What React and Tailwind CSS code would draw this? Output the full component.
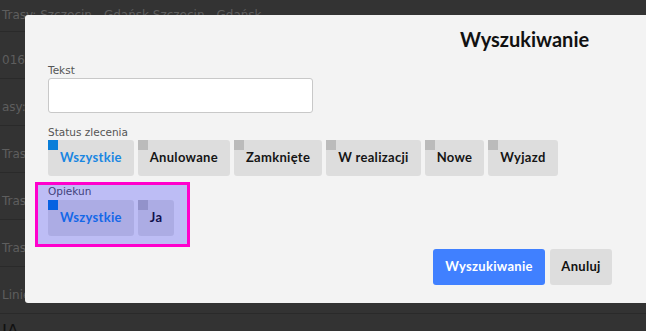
import React from "react";

const rows = [
  "Trasy: Szczecin - Gdańsk Szczecin - Gdańsk",
  "016",
  "asy: Hel",
  "Trasy: Gdańsk",
  "Trasy: Gdańsk",
  "Trasy: Gdańsk",
  "Linie",
];

function Chip({ label, selected }) {
  return (
    <button
      className={`relative h-[36px] rounded-[3px] bg-[#dddddd] px-[12px] text-[13px] font-bold tracking-[0.3px] ${
        selected ? "text-[#1a86e2]" : "text-[#151515]"
      }`}
    >
      <span
        className={`absolute left-0 top-0 h-[10px] w-[10px] ${
          selected ? "bg-[#0a7ed9]" : "bg-[#bbbbbb]"
        }`}
      />
      {label}
    </button>
  );
}

export default function App() {
  return (
    <div className="relative h-[331px] w-[646px] overflow-hidden bg-[#333333] font-['Lato',sans-serif]">
      <div className="flex flex-col font-['DejaVu_Sans',sans-serif] text-[12px] text-[#5e5e5e]">
        {rows.map((r, i) => (
          <div
            key={i}
            className={`flex items-end border-b border-[#2a2a2a] px-[2px] ${
              i === 0 ? "h-[32px] pb-[7px]" : "h-[47px] pb-[9px]"
            }`}
          >
            {r}
          </div>
        ))}
        <div className="px-[2px] pt-[8px] text-[17px] leading-[18px] text-[#111]">IA</div>
      </div>

      <div className="absolute left-[25px] top-[15px] flex h-[288px] w-[660px] flex-col rounded-[3px] bg-[#f3f3f3] px-[23px] text-[#111]">
        <div className="ml-[412px] pt-[12px] text-[20px] font-bold leading-[24px] text-[#111]">
          Wyszukiwanie
        </div>

        <div className="mt-[13px] font-['DejaVu_Sans',sans-serif] text-[10.5px] leading-[13px] text-[#555]">
          Tekst
        </div>
        <input
          className="mt-[1px] h-[35px] w-[265px] rounded-[3px] border border-[#c8c8c8] bg-white outline-none"
          type="text"
        />

        <div className="mt-[13px] font-['DejaVu_Sans',sans-serif] text-[10.5px] leading-[13px] text-[#555]">
          Status zlecenia
        </div>
        <div className="mt-[1px] flex gap-[4px]">
          <Chip label="Wszystkie" selected />
          <Chip label="Anulowane" />
          <Chip label="Zamknięte" />
          <Chip label="W realizacji" />
          <Chip label="Nowe" />
          <Chip label="Wyjazd" />
        </div>

        <div className="relative -mx-[10px] mt-[9px] w-[149px] px-[10px] pb-[8px]">
          <div className="font-['DejaVu_Sans',sans-serif] text-[10.5px] leading-[13px] text-[#555]">
            Opiekun
          </div>
          <div className="mt-[2px] flex gap-[4px]">
            <Chip label="Wszystkie" selected />
            <Chip label="Ja" />
          </div>
          <div className="pointer-events-none absolute -inset-[3px] border-[3px] border-[#ff00cc] bg-[rgba(0,0,255,0.22)]" />
        </div>

        <div className="ml-[385px] mt-[5px] flex gap-[5px]">
          <button className="h-[36px] w-[112px] rounded-[3px] bg-[#4080ff] text-[13px] font-bold tracking-[0.3px] text-white">
            Wyszukiwanie
          </button>
          <button className="h-[36px] w-[62px] rounded-[3px] bg-[#dddddd] text-[13px] font-bold tracking-[0.3px] text-[#111]">
            Anuluj
          </button>
        </div>
      </div>
    </div>
  );
}
